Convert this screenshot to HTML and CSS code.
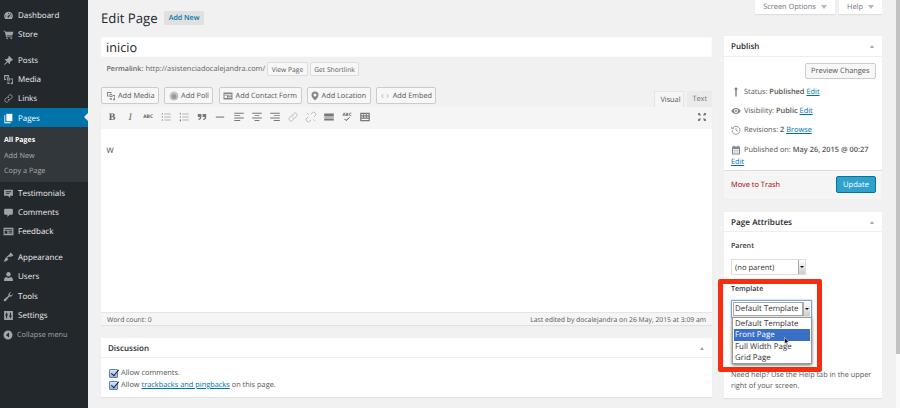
FILE: index.html
```html
<!DOCTYPE html>
<html lang="en">
<head>
<meta charset="utf-8">
<title>Edit Page</title>
<link rel="stylesheet" href="styles.css">
</head>
<body>
<div class="app">
  <nav class="side">
    <ul class="menu">
      <li class="item"><svg viewBox="0 0 20 20"><path d="M10 3a8 8 0 0 0-8 8c0 2 .8 3.900 2 5.300h12a8 8 0 0 0 2-5.300 8 8 0 0 0-8-8zm0 2a1 1 0 1 1 0 2 1 1 0 0 1 0-2zM5 10a1 1 0 1 1 0 2 1 1 0 0 1 0-2zm10 0a1 1 0 1 1 0 2 1 1 0 0 1 0-2zm-1-4 .8.700L11.500 11a1.700 1.700 0 1 1-1-.800z" fill-rule="evenodd"/></svg>Dashboard</li>
      <li class="item gap"><svg viewBox="0 0 20 20"><path d="M1 3h3l.6 2H19l-2 7H7l.4 1.500H17V15H6L3 4.500H1z"/><circle cx="7.500" cy="17" r="1.500"/><circle cx="15" cy="17" r="1.500"/></svg>Store</li>
      <li class="item"><svg viewBox="0 0 20 20"><path d="m11 1.500 7.500 7.500-1.300 1.200-1.200-.6-3.500 3.500c.5 1.500.3 2.800-.5 3.800L8.300 13 3 18l-1-1 5-5.300-3.900-3.700c1-.8 2.300-1 3.800-.5L10.400 4l-.6-1.200z"/></svg>Posts</li>
      <li class="item"><svg viewBox="0 0 20 20"><path d="M2 2h9v3H9V4H4v5h1.500v2H2zM7 6h4l2 2v4H7zm1.500 1.500V10h3V8.500zM14 8h4v9a2 2 0 1 1-2-2h.5v-5H14zM7 14h5v1.500H7zm1 2.500h4V18H8z"/></svg>Media</li>
      <li class="item"><svg class="line" viewBox="0 0 20 20"><path d="M9 6.500l3-3a3.500 3.500 0 0 1 4.500 4.500l-3 3.500a3.500 3.500 0 0 1-4.500 0M11 13.500l-3 3A3.500 3.500 0 0 1 3.500 12l3-3.500a3.500 3.500 0 0 1 4.500 0"/></svg>Links</li>
      <li class="item current"><svg viewBox="0 0 20 20"><path d="M6 1.500h11V15H6z"/><path d="M4 4v13h10v1.500H2.500V4z"/></svg>Pages</li>
      <li class="sub">
        <a class="sub-link now">All Pages</a>
        <a class="sub-link">Add New</a>
        <a class="sub-link">Copy a Page</a>
      </li>
      <li class="item"><svg viewBox="0 0 20 20"><path d="M2 3h16v11h-5v4l-4-4H2zm3 3v1.500h10V6zm0 3.500V11h7V9.500z" fill-rule="evenodd"/></svg>Testimonials</li>
      <li class="item"><svg viewBox="0 0 20 20"><path d="M4 3h12a2 2 0 0 1 2 2v7a2 2 0 0 1-2 2h-4l-4 4v-4H4a2 2 0 0 1-2-2V5a2 2 0 0 1 2-2z"/></svg>Comments</li>
      <li class="item gap"><svg viewBox="0 0 20 20"><path fill-rule="evenodd" d="M1 3h18v14H1zm2 3v1.500h14V6zm0 3v5h5V9zm7 0v1.500h7V9zm0 3v1.500h7V12z"/></svg>Feedback</li>
      <li class="item"><svg viewBox="0 0 20 20"><path d="M14 1l5 5-2 1.500-1-1-1 2.500-4-1-2.500 2-2-1.500L11 5zM6 9l4 4-2 2c-2 2-5 3-7 2 2-1 2-3 3-5z"/></svg>Appearance</li>
      <li class="item"><svg viewBox="0 0 20 20"><circle cx="10" cy="6" r="4"/><path d="M2 18v-3c0-2 2-3.500 4-4 1 1 2.500 1.500 4 1.500s3-.5 4-1.500c2 .5 4 2 4 4v3z"/></svg>Users</li>
      <li class="item"><svg viewBox="0 0 20 20"><path d="M18 5a5 5 0 0 1-6.500 5L5 18a2 2 0 1 1-3-3l8-6.500A5 5 0 0 1 15 2l-3 3 .8 2.200L15 8z"/></svg>Tools</li>
      <li class="item"><svg viewBox="0 0 20 20"><path fill-rule="evenodd" d="M2 2h16v16H2zm3.500 3v3H4v2h1.500v5h2v-5H9V8H7.500V5zm7 0v5H11v2h1.500v3h2v-3H16v-2h-1.500V5z"/></svg>Settings</li>
      <li class="collapse"><svg viewBox="0 0 20 20"><path fill-rule="evenodd" d="M10 1a9 9 0 1 1 0 18 9 9 0 0 1 0-18zm2 4-6 5 6 5z"/></svg>Collapse menu</li>
    </ul>
  </nav>

  <main class="main">
    <div class="tabs-top">
      <span class="meta-tab">Screen Options<i class="tri"></i></span>
      <span class="meta-tab">Help<i class="tri"></i></span>
    </div>
    <div class="heading">
      <h1 class="title">Edit Page</h1>
      <a class="add-new">Add New</a>
    </div>
    <div class="cols">
      <div class="col-main">
        <div class="title-input">inicio</div>
        <div class="permalink">
          <b>Permalink:</b> <span>http://asistenciadocalejandra.com/</span>
          <a class="mini-btn">View Page</a><a class="mini-btn">Get Shortlink</a>
        </div>
        <div class="media-row">
          <div class="media-btns">
            <a class="btn"><svg viewBox="0 0 20 20"><path d="M2 2h9v3H9V4H4v5h1.500v2H2zM7 6h4l2 2v4H7zm1.500 1.500V10h3V8.500zM14 8h4v9a2 2 0 1 1-2-2h.5v-5H14zM7 14h5v1.500H7zm1 2.500h4V18H8z"/></svg>Add Media</a>
            <a class="btn"><svg viewBox="0 0 20 20"><circle class="poll-out" cx="10" cy="10" r="9"/><circle class="poll-in" cx="10" cy="11" r="5"/></svg>Add Poll</a>
            <a class="btn"><svg viewBox="0 0 20 20"><path fill-rule="evenodd" d="M1 3h18v14H1zm2 3v1.500h14V6zm0 3v5h5V9zm7 0v1.500h7V9zm0 3v1.500h7V12z"/></svg>Add Contact Form</a>
            <a class="btn"><svg class="loc" viewBox="2 0 16 20"><path fill-rule="evenodd" d="M10 1a7 7 0 0 1 7 7c0 4-4 8-7 11-3-3-7-7-7-11a7 7 0 0 1 7-7zm0 4a3 3 0 1 0 0 6 3 3 0 0 0 0-6z"/></svg>Add Location</a>
            <a class="btn"><svg class="line embed" viewBox="0 0 20 20"><path d="M7 6l-4 4 4 4M13 6l4 4-4 4"/></svg>Add Embed</a>
          </div>
          <div class="mode-tabs">
            <span class="mode on">Visual</span>
            <span class="mode">Text</span>
          </div>
        </div>
        <div class="editor">
          <div class="toolbar">
            <span class="tool tb">B</span>
            <span class="tool ti">I</span>
            <span class="tool ts">ABC</span>
            <svg class="ico" viewBox="0 0 20 20"><path d="M3 4h2v2H3zm4 .4h11v1.200H7zM3 9h2v2H3zm4 .4h11v1.200H7zM3 14h2v2H3zm4 .4h11v1.200H7z"/></svg>
            <svg class="ico" viewBox="0 0 20 20"><path d="M3 3h1.500v3H3zm4 1.400h11v1.200H7zM3 9h2v2H3zm4 .4h11v1.200H7zM3 14h2v3H3zm4 .4h11v1.200H7z"/></svg>
            <svg class="ico" viewBox="0 0 20 20"><path d="M3 5h6v5c0 3-2 5-5 5v-2c1.500 0 2.500-1 2.500-3H3zm8 0h6v5c0 3-2 5-5 5v-2c1.500 0 2.500-1 2.500-3H11z"/></svg>
            <svg class="ico" viewBox="0 0 20 20"><path d="M3 9.200h14v1.800H3z"/></svg>
            <svg class="ico" viewBox="0 0 20 20"><path d="M2 3h16v1.500H2zm0 4h10v1.500H2zm0 4h16v1.500H2zm0 4h10v1.500H2z"/></svg>
            <svg class="ico" viewBox="0 0 20 20"><path d="M2 3h16v1.500H2zm4 4h8v1.500H6zm-4 4h16v1.500H2zm4 4h8v1.500H6z"/></svg>
            <svg class="ico" viewBox="0 0 20 20"><path d="M2 3h16v1.500H2zm6 4h10v1.500H8zm-6 4h16v1.500H2zm6 4h10v1.500H8z"/></svg>
            <svg class="ico line faint" viewBox="0 0 20 20"><path d="M9 6.500l3-3a3.500 3.500 0 0 1 4.500 4.500l-3 3.500a3.500 3.500 0 0 1-4.500 0M11 13.500l-3 3A3.500 3.500 0 0 1 3.500 12l3-3.500a3.500 3.500 0 0 1 4.500 0"/></svg>
            <svg class="ico line faint" viewBox="0 0 20 20"><path d="M10 5l2-2a3.500 3.500 0 0 1 5 5l-2 2M10 15l-2 2a3.500 3.500 0 0 1-5-5l2-2M3 3l3 3M14 14l3 3"/></svg>
            <svg class="ico" viewBox="0 0 20 20"><path d="M2 4h16v5H2zm0 6h16v1H2zm0 2.500h16V16H2z"/></svg>
            <span class="tool spell">ABC<svg class="line tick" viewBox="0 0 20 10"><path d="M5 4l3 3 7-6"/></svg></span>
            <svg class="ico" viewBox="0 0 20 20"><path fill-rule="evenodd" d="M2 3h16v14H2zm2 2v2h3V5zm4.500 0v2h3V5zM13 5v2h3V5zM4 9v2h3V9zm4.500 0v2h3V9zM13 9v2h3V9zm-9 4v2h12v-2z"/></svg>
            <svg class="ico full" viewBox="0 0 20 20"><path d="M2 2h5L5.500 3.500 8 6 6 8 3.500 5.500 2 7zm16 0v5l-1.500-1.500L14 8l-2-2 2.500-2.500L13 2zM2 18v-5l1.500 1.500L6 12l2 2-2.500 2.500L7 18zm16 0h-5l1.500-1.500L12 14l2-2 2.500 2.500L18 13z"/></svg>
          </div>
          <div class="canvas">W</div>
          <div class="status">
            <span>Word count: 0</span>
            <span>Last edited by docalejandra on 26 May, 2015 at 3:09 am</span>
          </div>
        </div>
        <section class="box discussion">
          <header class="box-head disc-head">Discussion<i class="up"></i></header>
          <div class="disc-body">
            <label class="check"><span class="cb"></span>Allow comments.</label>
            <label class="check"><span class="cb"></span>Allow&nbsp;<a class="link">trackbacks and pingbacks</a>&nbsp;on this page.</label>
          </div>
        </section>
      </div>

      <aside class="col-side">
        <section class="box publish">
          <header class="box-head">Publish<i class="up"></i></header>
          <div class="preview-row"><a class="btn-plain">Preview Changes</a></div>
          <div class="pub-row"><svg viewBox="0 0 20 20"><path d="M10 1a3 3 0 0 1 1.500 5.600V18l-1.500 2-1.500-2V6.600A3 3 0 0 1 10 1z"/></svg>Status:&nbsp;<b>Published</b>&nbsp;<a class="link">Edit</a></div>
          <div class="pub-row"><svg viewBox="0 0 20 20"><path fill-rule="evenodd" d="M10 4c4 0 7.500 2.500 9.500 6-2 3.500-5.500 6-9.500 6S2.500 13.500.5 10C2.500 6.500 6 4 10 4zm0 2a4 4 0 1 0 0 8 4 4 0 0 0 0-8zm0 2a2 2 0 1 1 0 4 2 2 0 0 1 0-4z"/></svg>Visibility:&nbsp;<b>Public</b>&nbsp;<a class="link">Edit</a></div>
          <div class="pub-row"><svg class="line rev" viewBox="0 0 20 20"><path d="M3.500 6A8 8 0 1 1 2 10.500M10 5.500V10.500l3.500 2"/><path d="M1.500 3v4.500H6"/></svg>Revisions:&nbsp;<b>2</b>&nbsp;<a class="link">Browse</a></div>
          <div class="pub-row"><svg viewBox="0 0 20 20"><path fill-rule="evenodd" d="M5 1h2v2h6V1h2v2h3v16H2V3h3zM4 8v9h12V8zm1.500 1.500h2v2h-2zm3.500 0h2v2H9zm3.500 0h2v2h-2zm-7 3.500h2v2h-2zm3.500 0h2v2H9zm3.500 0h2v2h-2z"/></svg>Published on:&nbsp;<b>May 26, 2015 @ 00:27</b></div>
          <div class="pub-edit"><a class="link">Edit</a></div>
          <footer class="pub-foot">
            <a class="trash">Move to Trash</a>
            <a class="update">Update</a>
          </footer>
        </section>

        <section class="box attrs">
          <header class="box-head attr-head">Page Attributes<i class="up"></i></header>
          <div class="attr-body">
            <div class="attr-label">Parent</div>
            <div class="native parent"><span class="native-val">(no parent)</span><span class="native-arrow"></span></div>
            <div class="attr-label">Template</div>
            <div class="native-spacer"></div>
            <p class="help">Need help? Use the Help tab in the upper right of your screen.</p>
          </div>
          <div class="red-frame"></div>
          <div class="tpl-select"><span class="tpl-val">Default Template</span><span class="native-arrow"></span></div>
          <ul class="tpl-list">
            <li>Default Template</li>
            <li class="sel">Front Page</li>
            <li>Full Width Page</li>
            <li>Grid Page</li>
          </ul>
          <svg class="cursor" viewBox="0 0 12 18"><path d="M1 1v13l3-3 2 5 2-1-2-4.500h4z"/></svg>
        </section>
      </aside>
    </div>
  </main>
  <div class="scroll"><div class="thumb"></div></div>
</div>
</body>
</html>
```

FILE: styles.css
```css
* { box-sizing: border-box; }
html, body { margin: 0; height: 100%; overflow: hidden; }
body { font-family: "Open Sans", sans-serif; font-size: 7.500px; color: #444; background: #f1f1f1; text-rendering: geometricPrecision; }
a { text-decoration: none; }
ul { list-style: none; margin: 0; padding: 0; }

.app { display: flex; width: 900px; height: 408px; overflow: hidden; }

/* sidebar */
.side { width: 88px; flex: none; background: #23282d; padding-top: 4.500px; color: #eee; }
.item { display: flex; align-items: center; height: 19.300px; padding-top: 2px; font-size: 8px; padding-left: 3px; color: #eee; }
.item svg { width: 11px; height: 11px; margin-right: 4px; fill: #9ea3a8; flex: none; }
.item svg.line { fill: none; stroke: #9ea3a8; stroke-width: 1.600; }
.gap { margin-bottom: 6.600px; }
.current { background: #0073aa; color: #fff; position: relative; }
.current svg { fill: #fff; }
.current::after { content: ""; position: absolute; right: 0; top: 5px; border: 4.500px solid transparent; border-right-color: #f1f1f1; border-left: 0; }
.sub { background: #32373c; padding: 6.500px 0 3px 4px; display: flex; flex-direction: column; height: 55.500px; }
.sub-link { font-size: 7.300px; line-height: 15.500px; color: #a9acaf; }
.now { color: #fff; font-weight: 700; font-size: 7px; }
.collapse { display: flex; align-items: center; height: 19.300px; padding-top: 2px; font-size: 7.300px; color: #a0a5aa; padding-left: 3px; }
.collapse svg { width: 10px; height: 10px; margin-right: 4px; fill: #a0a5aa; }

/* main */
.main { flex: 1; min-width: 0; padding-left: 13px; padding-right: 14px; }
.tabs-top { display: flex; justify-content: flex-end; gap: 4px; height: 14px; }
.meta-tab { display: flex; align-items: center; justify-content: center; gap: 5px; background: #fff; height: 14px; color: #72777c; font-size: 7.400px; box-shadow: 0 1px 1px rgba(0,0,0,.08); }
.meta-tab:first-child { width: 80px; }
.meta-tab:last-child { width: 43px; }
.tri { border: 3px solid transparent; border-top: 4px solid #b4b9be; border-bottom: 0; }
.heading { display: flex; align-items: center; gap: 6px; height: 22px; margin-top: -7px; margin-bottom: 8px; }
.title { font-size: 13.200px; font-weight: 400; color: #23282d; margin: 0; line-height: 20px; }
.add-new { background: #e0e0e0; color: #0073aa; font-size: 7.100px; font-weight: 600; padding: 0 5px; height: 14px; line-height: 15.500px; border-radius: 1px; }

.cols { display: flex; gap: 12px; }
.col-main { width: 611px; flex: none; }
.col-side { width: 158px; flex: none; }

.title-input { height: 20px; background: #fff; font-size: 12.700px; line-height: 21px; color: #222; padding-left: 5px; box-shadow: inset 0 0 1px rgba(0,0,0,.2); }
.permalink { display: flex; align-items: center; height: 15px; padding-top: 1px; margin-top: 4px; padding-left: 5.500px; font-size: 7.400px; color: #666; gap: 2px; white-space: nowrap; }
.permalink b { font-weight: 600; font-size: 7.100px; }
.mini-btn { height: 14.500px; line-height: 13px; padding: 0 3.500px; background: #f7f7f7; border: 1px solid #ddd; border-radius: 2px; font-size: 6.700px; color: #555; }

.media-row { display: flex; justify-content: space-between; margin-top: 11px; height: 20px; }
.media-btns { display: flex; gap: 5.100px; height: 17px; }
.btn { display: flex; align-items: center; height: 16.500px; padding: 1px 3.500px 0; background: #f7f7f7; border: 1px solid #ccc; border-radius: 2px; font-size: 7.300px; color: #555; white-space: nowrap; }
.btn svg { width: 10px; height: 10px; margin-right: 2.500px; fill: #82878c; flex: none; }
.btn svg.loc { width: 8px; }
.btn svg.embed { fill: none; stroke: #aaa; stroke-width: 1.600; }
.btn .poll-out { fill: #c4c4c4; }
.btn .poll-in { fill: #999; }
.mode-tabs { display: flex; gap: 3px; align-self: flex-end; }
.mode { height: 16px; line-height: 16.500px; padding: 0 5px; font-size: 7.300px; color: #72777c; background: #ebebeb; }
.mode.on { background: #f5f5f5; color: #555; border: 1px solid #e5e5e5; border-bottom: 0; width: 30px; }

.editor { background: #fff; box-shadow: 0 1px 1px rgba(0,0,0,.06); }
.toolbar { display: flex; align-items: center; height: 22px; padding-bottom: 2px; background: #f5f5f5; padding-left: 5px; gap: 6.080px; }
.ico { width: 12px; height: 12px; fill: #777; flex: none; }
.ico.faint { fill: none; stroke: #bcbcbc; stroke-width: 1.600; }
.full { margin-left: auto; margin-right: 5px; width: 10px; height: 10px; }
.tool { width: 12px; text-align: center; color: #666; flex: none; }
.tb { font-weight: 700; font-size: 10px; font-family: "Liberation Serif", serif; }
.ti { font-style: italic; font-size: 10px; font-family: "Liberation Serif", serif; }
.ts { font-size: 5px; font-weight: 700; }
.spell { font-size: 4.500px; line-height: 4px; font-weight: 700; display: flex; flex-direction: column; align-items: center; }
.spell svg { width: 10px; height: 5px; fill: none; stroke: #555; stroke-width: 2; }
.canvas { height: 183px; padding: 16.500px 0 0 5.500px; font-size: 7.800px; color: #444; }
.status { display: flex; justify-content: space-between; align-items: center; height: 13px; padding: 0 6px; background: #f5f5f5; border-top: 1px solid #e5e5e5; font-size: 6.800px; color: #555; }

.box { background: #fff; box-shadow: 0 1px 1px rgba(0,0,0,.06); }
.box-head { display: flex; align-items: center; justify-content: space-between; height: 21px; padding: 0 8.500px 0 7px; font-size: 8px; font-weight: 600; color: #23282d; border-bottom: 1px solid #eee; }
.attr-head { height: 20px; padding-top: 2px; font-size: 8.200px; }
.up { border: 2.500px solid transparent; border-bottom: 3.500px solid #a0a5aa; border-top: 0; }
.link { color: #0073aa; text-decoration: underline; }

.discussion { margin-top: 13px; height: 59px; }
.disc-head { height: 20px; padding-top: 2px; }
.disc-body { padding: 9px 0 0 8px; }
.check { display: flex; align-items: center; height: 12px; font-size: 7.400px; color: #555; white-space: nowrap; }
.cb { width: 9px; height: 9px; margin-right: 3px; background: linear-gradient(#d7e6f7, #8fb4e0); border: 1px solid #5b85b8; border-radius: 1px; position: relative; }
.cb::after { content: ""; position: absolute; left: 2.500px; top: -2px; width: 3px; height: 7px; border: solid #223; border-width: 0 1.500px 1.500px 0; transform: rotate(40deg); }

.publish { height: 162px; margin-top: -1px; position: relative; }
.preview-row { display: flex; justify-content: flex-end; padding: 6px 6px 0 0; height: 25px; }
.btn-plain { height: 16px; line-height: 15.500px; padding: 0 5.500px; background: #f7f7f7; border: 1px solid #ccc; border-radius: 2px; font-size: 7.400px; color: #555; white-space: nowrap; }
.pub-row { display: flex; align-items: center; height: 19.300px; padding-left: 7px; font-size: 7.400px; color: #555; white-space: nowrap; }
.pub-row b { font-weight: 600; }
.pub-row svg { width: 10px; height: 10px; margin-right: 3px; fill: #82878c; flex: none; }
.pub-row svg.rev { fill: none; stroke: #82878c; stroke-width: 1.600; }
.pub-edit { font-size: 7.400px; padding-left: 7px; height: 11px; line-height: 7px; }
.pub-foot { display: flex; justify-content: space-between; align-items: center; height: 29px; padding: 0 6px 1px 7px; background: #f5f5f5; border-top: 1px solid #ddd; }
.trash { color: #a00; font-size: 7.400px; }
.update { width: 40px; height: 17px; line-height: 16px; text-align: center; background: #2ea2cc; border: 1px solid #0074a2; border-radius: 2px; color: #fff; font-size: 7.600px; }

.attrs { margin-top: 14px; height: 186px; position: relative; }
.attr-body { padding: 0 7px; }
.attr-label { font-weight: 600; font-size: 7.100px; color: #333; margin-top: 8px; height: 11px; line-height: 13px; }
.native { display: flex; align-items: stretch; height: 16px; margin-top: 8px; background: #fff; border: 1px solid #ddd; }
.parent { width: 75px; }
.native-val { flex: 1; font-size: 7.600px; color: #333; padding-left: 3px; line-height: 16px; }
.native-arrow { width: 7px; background: linear-gradient(#fff, #ccc); border-left: 1px solid #aaa; position: relative; flex: none; }
.native-arrow::after { content: ""; position: absolute; left: 1px; top: 6px; border: 2px solid transparent; border-top: 2.500px solid #111; border-bottom: 0; }
.native-spacer { height: 76px; }
.help { margin: 0; font-size: 7.300px; line-height: 11px; color: #555; }

.red-frame { position: absolute; left: -6px; top: 67px; width: 104px; height: 93px; border: 5px solid #f52e12; border-radius: 2px; }
.tpl-select { position: absolute; left: 7px; top: 88px; width: 81px; height: 18px; display: flex; background: #fff; border: 1px solid #7aa7d9; box-shadow: 0 0 2px #8bb7ea; padding: 1px; }
.tpl-val { flex: 1; border: 1px solid #aaa; font-size: 7.900px; line-height: 13.500px; padding-left: 1px; color: #333; white-space: nowrap; overflow: hidden; }
.tpl-list { position: absolute; left: 8px; top: 105px; width: 80px; background: #fff; border: 1px solid #999; box-shadow: 0 1px 3px rgba(0,0,0,.6); padding: 0 1px; }
.tpl-list li { height: 11.300px; line-height: 13px; font-size: 7.900px; padding-left: 1px; color: #333; white-space: nowrap; }
.tpl-list .sel { background: #3a6fc7; color: #fff; }
.cursor { position: absolute; left: 60px; top: 125px; width: 6px; height: 9px; fill: #111; stroke: #fff; stroke-width: 1; }

.scroll { width: 4px; flex: none; background: #fafafa; }
.thumb { height: 354px; background: #c2c2c2; }
```
